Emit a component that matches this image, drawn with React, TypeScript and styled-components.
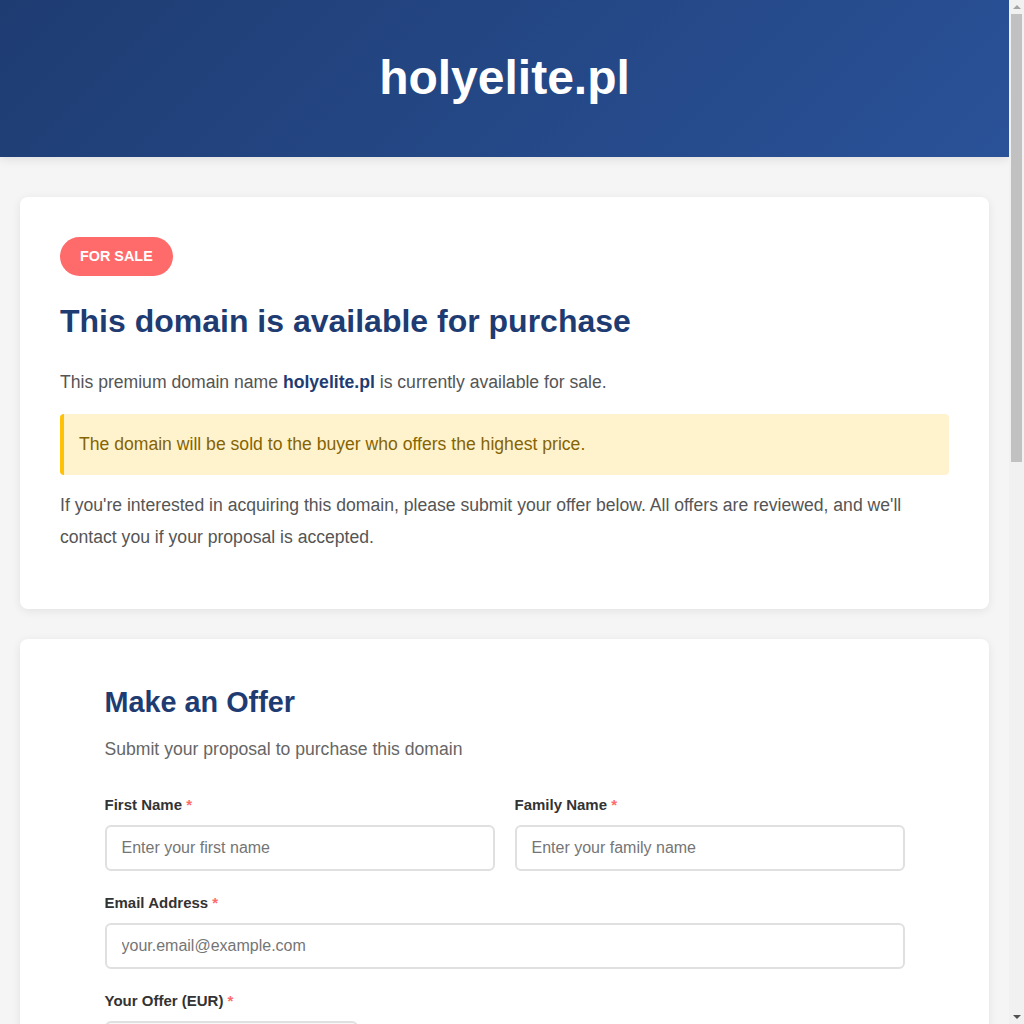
import React from 'react';
import styled, { createGlobalStyle } from 'styled-components';

const GlobalStyle = createGlobalStyle`
  * {
    box-sizing: border-box;
  }

  body {
    margin: 0 15px 0 0;
    background: #f5f5f5;
    color: #555;
    font-family: "Liberation Sans", Arial, sans-serif;
    line-height: 1.6;
  }
`;

const App = () => {
  return (
    <>
      <GlobalStyle />
      <Header>
        <SiteTitle>holyelite.pl</SiteTitle>
      </Header>

      <Container>
        <Card>
          <Badge>FOR SALE</Badge>
          <Headline>This domain is available for purchase</Headline>
          <Text>
            This premium domain name <DomainName>holyelite.pl</DomainName> is currently available for sale.
          </Text>
          <Notice>The domain will be sold to the buyer who offers the highest price.</Notice>
          <Text>
            If you're interested in acquiring this domain, please submit your offer below. All offers are
            reviewed, and we'll contact you if your proposal is accepted.
          </Text>
        </Card>

        <Card>
          <OfferForm onSubmit={e => e.preventDefault()}>
            <FormTitle>Make an Offer</FormTitle>
            <FormSubtitle>Submit your proposal to purchase this domain</FormSubtitle>

            <FieldRow $columns={2}>
              <Field>
                <Label>First Name <Required>*</Required></Label>
                <Input type="text" placeholder="Enter your first name" />
              </Field>
              <Field>
                <Label>Family Name <Required>*</Required></Label>
                <Input type="text" placeholder="Enter your family name" />
              </Field>
            </FieldRow>

            <Field>
              <Label>Email Address <Required>*</Required></Label>
              <Input type="email" placeholder="your.email@example.com" />
            </Field>

            <FieldRow $columns={3}>
              <Field>
                <Label>Your Offer (EUR) <Required>*</Required></Label>
                <Input type="number" placeholder="0.00" $muted />
              </Field>
            </FieldRow>

            <Field>
              <Label>Message</Label>
              <TextArea rows={5} placeholder="Add any details about your offer (optional)" />
            </Field>

            <SubmitButton type="submit">Submit Offer</SubmitButton>
          </OfferForm>
        </Card>
      </Container>

      {/* window scrollbar, as the page is taller than the viewport */}
      <ScrollTrack aria-hidden>
        <ScrollArrow $up />
        <ScrollThumb />
        <ScrollArrow />
      </ScrollTrack>
    </>
  );
};

const Header = styled.header`
  background: linear-gradient(135deg, #1e3c72 0%, #2a5298 100%);
  padding: 40px 20px;
  text-align: center;
  box-shadow: 0 2px 10px rgba(0, 0, 0, 0.1);
`;

const SiteTitle = styled.h1`
  margin: 0;
  color: #fff;
  font-size: 48px;
  font-weight: 700;
  line-height: 1.6;
`;

const Container = styled.main`
  max-width: 1200px;
  margin: 40px auto;
  padding: 0 20px;
`;

const Card = styled.section`
  background: #fff;
  border-radius: 8px;
  box-shadow: 0 2px 10px rgba(0, 0, 0, 0.08);
  padding: 40px;
  margin-bottom: 30px;
`;

const Badge = styled.span`
  display: inline-block;
  background: #ff6b6b;
  color: #fff;
  font-size: 0.9rem;
  font-weight: 700;
  padding: 8px 20px;
  border-radius: 20px;
  margin-bottom: 20px;
`;

const Headline = styled.h2`
  margin: 0 0 20px;
  color: #1e3c72;
  font-size: 32px;
  font-weight: 700;
  line-height: 1.6;
`;

const Text = styled.p`
  margin: 0 0 15px;
  font-size: 1.1rem;
  line-height: 1.8;
  color: #555;
`;

const DomainName = styled.strong`
  color: #1e3c72;
`;

const Notice = styled.div`
  margin: 15px 0;
  padding: 15px;
  background: #fff3cd;
  border-left: 4px solid #ffc107;
  border-radius: 4px;
  color: #856404;
  font-size: 1.1rem;
  line-height: 1.8;
`;

const OfferForm = styled.form`
  max-width: 800px;
  margin: 0 auto;
`;

const FormTitle = styled.h2`
  margin: 0 0 10px;
  color: #1e3c72;
  font-size: 1.8rem;
  font-weight: 700;
  line-height: 1.6;
`;

const FormSubtitle = styled.p`
  margin: 0 0 30px;
  color: #666;
  font-size: 1.1rem;
`;

const FieldRow = styled.div<{ $columns: number }>`
  display: grid;
  grid-template-columns: repeat(${p => p.$columns}, 1fr);
  gap: 20px;
`;

const Field = styled.div`
  margin-bottom: 20px;
`;

const Label = styled.label`
  display: block;
  margin-bottom: 8px;
  color: #333;
  font-size: 15px;
  font-weight: 700;
`;

const Required = styled.span`
  color: #ff6b6b;
`;

const Input = styled.input<{ $muted?: boolean }>`
  display: block;
  width: 100%;
  padding: 12px 15px;
  border: 2px solid #e0e0e0;
  border-radius: 6px;
  background: ${p => (p.$muted ? '#f8f8f8' : '#fff')};
  font-family: inherit;
  font-size: 16px;
  color: #333;

  &::placeholder {
    color: #757575;
  }
`;

const TextArea = styled.textarea`
  display: block;
  width: 100%;
  padding: 12px 15px;
  border: 2px solid #e0e0e0;
  border-radius: 6px;
  font-family: inherit;
  font-size: 16px;
  resize: vertical;
`;

const SubmitButton = styled.button`
  width: 100%;
  padding: 15px;
  border: none;
  border-radius: 6px;
  background: linear-gradient(135deg, #1e3c72, #2a5298);
  color: #fff;
  font-family: inherit;
  font-size: 17px;
  font-weight: 700;
  cursor: pointer;
`;

const ScrollTrack = styled.div`
  position: fixed;
  top: 0;
  right: 0;
  bottom: 0;
  width: 15px;
  background: #f1f1f1;
  display: flex;
  flex-direction: column;
  align-items: center;
`;

const ScrollThumb = styled.div`
  width: 11px;
  height: 448px;
  margin-bottom: auto;
  background: #c1c1c1;
`;

const ScrollArrow = styled.div<{ $up?: boolean }>`
  flex: none;
  width: 0;
  height: 0;
  margin: 5px 0;
  border-left: 4px solid transparent;
  border-right: 4px solid transparent;
  ${p =>
    p.$up
      ? 'border-bottom: 4px solid #a3a3a3;'
      : 'border-top: 4px solid #505050;'}
`;

export default App;
